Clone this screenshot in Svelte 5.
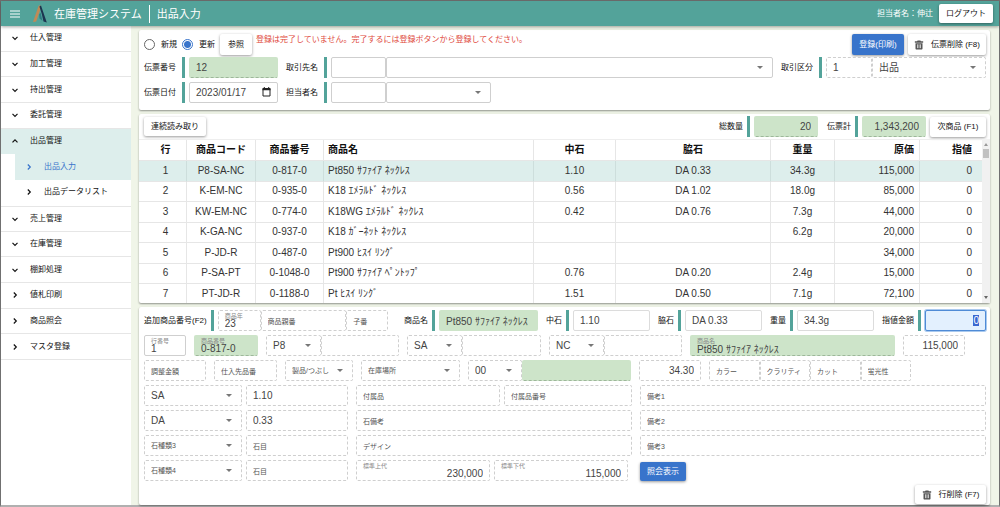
<script>
  import { onMount } from 'svelte';

  const menu = [
    { name: '仕入管理' },
    { name: '加工管理' },
    { name: '持出管理' },
    { name: '委託管理' },
    { name: '出品管理', open: true },
    { name: '出品入力', sub: true, current: true },
    { name: '出品データリスト', sub: true },
    { name: '売上管理' },
    { name: '在庫管理' },
    { name: '棚卸処理' },
    { name: '値札印刷', leaf: true },
    { name: '商品照会', leaf: true },
    { name: 'マスタ登録', leaf: true }
  ];

  const heads = ['行', '商品コード', '商品番号', '商品名', '中石', '脇石', '重量', '原価', '指値'];
  const rows = [
    ['1', 'P8-SA-NC', '0-817-0', 'Pt850 ｻﾌｧｲｱ ﾈｯｸﾚｽ', '1.10', 'DA 0.33', '34.3g', '115,000', '0'],
    ['2', 'K-EM-NC', '0-935-0', 'K18 ｴﾒﾗﾙﾄﾞ ﾈｯｸﾚｽ', '0.56', 'DA 1.02', '18.0g', '85,000', '0'],
    ['3', 'KW-EM-NC', '0-774-0', 'K18WG ｴﾒﾗﾙﾄﾞ ﾈｯｸﾚｽ', '0.42', 'DA 0.76', '7.3g', '44,000', '0'],
    ['4', 'K-GA-NC', '0-937-0', 'K18 ｶﾞｰﾈｯﾄ ﾈｯｸﾚｽ', '', '', '6.2g', '20,000', '0'],
    ['5', 'P-JD-R', '0-487-0', 'Pt900 ﾋｽｲ ﾘﾝｸﾞ', '', '', '', '34,000', '0'],
    ['6', 'P-SA-PT', '0-1048-0', 'Pt900 ｻﾌｧｲｱ ﾍﾟﾝﾄｯﾌﾟ', '0.76', 'DA 0.20', '2.4g', '15,000', '0'],
    ['7', 'PT-JD-R', '0-1188-0', 'Pt ﾋｽｲ ﾘﾝｸﾞ', '1.51', 'DA 0.50', '7.1g', '72,100', '0']
  ];

  let mode = $state('update');
  let limitPrice;

  onMount(() => {
    limitPrice.focus();
    limitPrice.select();
  });
</script>

{#snippet chevron(dir)}
  <svg class="chev" viewBox="0 0 8 8" aria-hidden="true">
    <path d={dir === 'down' ? 'M1.5 2.8 4 5.3 6.5 2.8' : dir === 'up' ? 'M1.5 5.3 4 2.8 6.5 5.3' : 'M2.8 1.5 5.3 4 2.8 6.5'} />
  </svg>
{/snippet}

{#snippet trash()}
  <svg class="trash" viewBox="0 0 12 12" aria-hidden="true">
    <path d="M4.3 0.6h3.4l.6 1H11v1.6H1V1.6h2.7z" />
    <path d="M1.8 3.8h8.4v6.4c0 .7-.5 1.2-1.2 1.2H3c-.7 0-1.200-.5-1.200-1.200z" />
    <path class="slot" d="M4.200 5.200v4.600M6 5.200v4.600M7.800 5.200v4.600" />
  </svg>
{/snippet}

{#snippet field(name, value = '', kind = 'dash')}
  <input class="box {kind}" aria-label={name} {value} readonly={kind.includes('green')} />
{/snippet}

{#snippet hint(name)}
  <input class="box dash" aria-label={name} placeholder={name} />
{/snippet}

{#snippet floating(name, value, kind = 'dash')}
  <label class="float">
    <span>{name}</span>
    <input class="box {kind}" {value} />
  </label>
{/snippet}

{#snippet drop(name, value = '', kind = 'dash')}
  <span class="drop">
    <select class="box {kind}" aria-label={name}><option>{value}</option></select>
  </span>
{/snippet}

<div class="page">
  <header>
    <button class="burger" aria-label="メニュー">
      <svg viewBox="0 0 10 8"><path d="M0 1h10M0 4h10M0 7h10" /></svg>
    </button>
    <svg class="logo" viewBox="0 0 14 18" aria-hidden="true">
      <path d="M5.500 1 7.200 0 8 2.500 3.200 16.500 0 17z" fill="#c08a56" />
      <path d="M6.400 1.500 8 0.500 13.800 17.500 10.500 16.500 8.800 9z" fill="#1c3550" />
      <path d="M6.200 9.500 7.500 7.500 9.500 16 6.500 13.500z" fill="#2d7d83" />
    </svg>
    <h1>在庫管理システム</h1>
    <h2>出品入力</h2>
    <span class="user">担当者名：伸辻</span>
    <button class="btn logout">ログアウト</button>
  </header>

  <div class="body">
    <nav>
      {#each menu as item}
        <a
          href="#menu"
          class:open={item.open}
          class:sub={item.sub}
          class:current={item.current}
        >
          {@render chevron(item.open ? 'up' : item.sub || item.leaf ? 'right' : 'down')}
          {item.name}
        </a>
      {/each}
    </nav>

    <main>
      <section class="panel slip">
        <div class="row first">
          <label class="radio"><input type="radio" value="new" bind:group={mode} />新規</label>
          <label class="radio"><input type="radio" value="update" bind:group={mode} />更新</label>
          <button class="btn refer">参照</button>
          <p class="error">登録は完了していません。完了するには登録ボタンから登録してください。</p>
          <button class="btn primary register">登録(印刷)</button>
          <button class="btn remove">{@render trash()}伝票削除 (F8)</button>
        </div>
        <div class="row">
          <div class="item short">
            <label for="slip-no">伝票番号</label>
            <input id="slip-no" class="box green" value="12" readonly />
          </div>
          <div class="item grow">
            <label for="client">取引先名</label>
            <div class="client">
              <input id="client" class="box" />
              {@render drop('取引先名選択', '', '')}
            </div>
          </div>
          <div class="item kubun">
            <label for="kubun">取引区分</label>
            <div class="kinds">
              <input id="kubun" class="box dash" value="1" />
              {@render drop('取引区分選択', '出品')}
            </div>
          </div>
        </div>
        <div class="row">
          <div class="item short">
            <label for="slip-date">伝票日付</label>
            <span class="date">
              <input id="slip-date" class="box" value="2023/01/17" />
              <svg viewBox="0 0 9 10" aria-hidden="true">
                <path d="M1 2h7v7H1z" /><path class="bar" d="M.5 1h8v2.200h-8zM1.800 0h1v1.500h-1zM6.200 0h1v1.500h-1z" />
              </svg>
            </span>
          </div>
          <div class="item staff">
            <label for="staff">担当者名</label>
            <div class="staffs">
              <input id="staff" class="box" />
              {@render drop('担当者名選択', '', '')}
            </div>
          </div>
        </div>
      </section>

      <section class="panel list">
        <div class="bar-row">
          <button class="btn scan">連続読み取り</button>
          <div class="item total">
            <label for="count">総数量</label>
            <input id="count" class="box green right" value="20" readonly />
          </div>
          <div class="item total">
            <label for="sum">伝票計</label>
            <input id="sum" class="box green right" value="1,343,200" readonly />
          </div>
          <button class="btn next">次商品 (F1)</button>
        </div>
        <div class="scroller">
          <table>
            <thead>
              <tr>{#each heads as head}<th scope="col">{head}</th>{/each}</tr>
            </thead>
            <tbody>
              {#each rows as row, i}
                <tr class:picked={i === 0}>{#each row as cell}<td>{cell}</td>{/each}</tr>
              {/each}
            </tbody>
          </table>
          <div class="track" aria-hidden="true"><i class="up"></i><i class="thumb"></i><i class="down"></i></div>
        </div>
      </section>

      <section class="panel detail">
        <div class="line a">
          <div class="item added">
            <label for="year">追加商品番号(F2)</label>
            <div class="triple">
              <div class="float">
                <span>商品年</span>
                <input id="year" class="box dash" value="23" />
              </div>
              {@render hint('商品親番')}
              {@render hint('子番')}
            </div>
          </div>
          <div class="item">
            <label for="pname">商品名</label>
            <input id="pname" class="box green plain" value="Pt850 ｻﾌｧｲｱ ﾈｯｸﾚｽ" readonly />
          </div>
          <div class="item">
            <label for="center">中石</label><input id="center" class="box soft" value="1.10" />
          </div>
          <div class="item">
            <label for="side">脇石</label><input id="side" class="box soft" value="DA 0.33" />
          </div>
          <div class="item">
            <label for="weight">重量</label><input id="weight" class="box soft" value="34.3g" />
          </div>
          <div class="item">
            <label for="limit">指値金額</label>
            <input id="limit" class="box active right" value="0" bind:this={limitPrice} />
          </div>
        </div>

        <div class="line b">
          {@render floating('行番号', '1', '')}
          {@render floating('商品番号', '0-817-0', 'green')}
          <div class="pair">{@render drop('地金', 'P8')}{@render field('地金名')}</div>
          <div class="pair">{@render drop('石種', 'SA')}{@render field('石種名')}</div>
          <div class="pair">{@render drop('品種', 'NC')}{@render field('品種名')}</div>
          {@render floating('商品名', 'Pt850 ｻﾌｧｲｱ ﾈｯｸﾚｽ', 'green')}
          {@render field('原価', '115,000', 'dash right')}
        </div>

        <div class="line c">
          {@render hint('調整金額')}
          {@render hint('仕入先品番')}
          <span class="muted">{@render drop('製品区分', '製品/つぶし')}</span>
          <span class="muted">{@render drop('在庫場所', '在庫場所')}</span>
          <div class="place">{@render drop('場所コード', '00')}{@render field('場所名', '', 'green')}</div>
          {@render field('重量', '34.30', 'dash right')}
          <div class="quad">
            {@render hint('カラー')}
            {@render hint('クラリティ')}
            {@render hint('カット')}
            {@render hint('蛍光性')}
          </div>
        </div>

        <div class="line d">
          <div class="stone">{@render drop('石種類1', 'SA')}{@render field('石目1', '1.10')}</div>
          <div class="extra">{@render hint('付属品')}{@render hint('付属品番号')}</div>
          {@render hint('備考1')}
        </div>
        <div class="line d">
          <div class="stone">{@render drop('石種類2', 'DA')}{@render field('石目2', '0.33')}</div>
          {@render hint('石備考')}
          {@render hint('備考2')}
        </div>
        <div class="line d">
          <div class="stone"><span class="muted">{@render drop('石種類3', '石種類3')}</span>{@render hint('石目')}</div>
          {@render hint('デザイン')}
          {@render hint('備考3')}
        </div>
        <div class="line d">
          <div class="stone"><span class="muted">{@render drop('石種類4', '石種類4')}</span>{@render hint('石目')}</div>
          <div class="price">
            {@render floating('標準上代', '230,000', 'dash right')}
            {@render floating('標準下代', '115,000', 'dash right')}
          </div>
          <div><button class="btn primary inquiry">照会表示</button></div>
        </div>
        <div class="foot"><button class="btn remove-row">{@render trash()}行削除 (F7)</button></div>
      </section>
    </main>
  </div>
</div>

<style>
  :global(body) {
    margin: 0;
  }
  .page,
  .page * {
    box-sizing: border-box;
  }
  .page {
    display: flex;
    flex-direction: column;
    min-height: 100vh;
    border: 1px solid #707070;
    border-bottom: 2px solid #b0b0b0;
    font: 8px/12px 'Liberation Sans', 'Noto Sans CJK JP', sans-serif;
    color: #111;
    background: #f0f5e8;
  }
  button,
  input,
  select {
    font: inherit;
    color: inherit;
    margin: 0;
    min-width: 0;
  }
  header {
    position: relative;
    z-index: 1;
    display: flex;
    align-items: center;
    height: 25px;
    padding: 0 6px 0 9px;
    color: #fff;
    background: #53a39a;
    box-shadow: 0 1px 3px rgba(0, 0, 0, 0.35);
  }
  .burger {
    width: 10px;
    height: 8px;
    padding: 0;
    border: 0;
    background: none;
  }
  .burger svg {
    display: block;
    stroke: #fff;
    stroke-width: 1;
  }
  .logo {
    width: 14px;
    height: 18px;
    margin: 0 7px 0 13px;
  }
  h1,
  h2 {
    margin: 0;
    font-size: 11px;
    line-height: 18px;
    font-weight: 400;
    white-space: nowrap;
  }
  h2 {
    margin-left: 7px;
    padding-left: 7px;
    border-left: 1px solid #fff;
  }
  .user {
    margin-left: auto;
    padding-right: 6px;
  }
  .btn {
    display: flex;
    align-items: center;
    justify-content: center;
    height: 21px;
    padding: 0;
    border: 0;
    border-radius: 2px;
    background: #fff;
    color: #111;
    white-space: nowrap;
    box-shadow: 0 1px 3px rgba(0, 0, 0, 0.4);
  }
  .btn.primary {
    color: #fff;
    background: #3874cb;
  }
  .logout {
    width: 54px;
    height: 19px;
  }
  .body {
    display: flex;
    flex: 1;
  }
  nav {
    flex: none;
    width: 130px;
    display: grid;
    grid-template-rows: repeat(13, minmax(0, 1fr)) 145px;
    background: #fff;
  }
  nav a {
    display: flex;
    align-items: center;
    gap: 11px;
    padding-left: 10px;
    border-bottom: 1px solid #e6e6e6;
    color: #111;
    text-decoration: none;
  }
  nav a.open {
    background: #ddeeec;
    border-color: #ddeeec;
  }
  nav a.sub {
    margin-left: 14px;
    border-color: transparent;
  }
  nav a.sub + a:not(.sub) {
    border-top: 1px solid #e6e6e6;
  }
  nav a.current {
    color: #3874cb;
    background: #ddeeec;
  }
  .chev {
    width: 8px;
    height: 8px;
    fill: none;
    stroke: currentColor;
    stroke-width: 1.2;
  }
  main {
    flex: 1;
    min-width: 0;
    display: flex;
    flex-direction: column;
    gap: 4px;
    padding: 4px 9px 0 8px;
  }
  .panel {
    background: #fff;
    border-radius: 2px;
    box-shadow: 0 1px 2px rgba(0, 0, 0, 0.4);
  }
  .slip {
    padding: 4px 4px 7px 5px;
  }
  .row {
    display: flex;
    gap: 8px;
  }
  .row + .row {
    margin-top: 4px;
  }
  .first {
    gap: 4px;
  }
  .first + .row {
    margin-top: 2px;
  }
  .radio {
    display: flex;
    align-items: center;
    gap: 6px;
    margin-right: 1px;
  }
  .radio input {
    appearance: none;
    width: 11px;
    height: 11px;
    border: 1px solid #666;
    border-radius: 50%;
  }
  .radio input:checked {
    border-color: #3874cb;
    background: radial-gradient(#3874cb 0 3px, #fff 4px);
  }
  .refer {
    width: 32px;
  }
  .error {
    flex: 1;
    margin: 0;
    color: #e0493c;
  }
  .register {
    width: 52px;
  }
  .remove {
    width: 78px;
    gap: 7px;
  }
  .trash {
    width: 10px;
    height: 10px;
    fill: #555;
  }
  .slot {
    stroke: #ddd;
    stroke-width: 1;
  }
  .item {
    display: flex;
    align-items: stretch;
    min-width: 0;
  }
  .item > label {
    flex: none;
    display: flex;
    align-items: center;
    padding-right: 4px;
    margin-right: 4px;
    border-right: 3px solid #53a39a;
    white-space: nowrap;
  }
  .item > :last-child {
    flex: 1;
    min-width: 0;
  }
  .row .item > label {
    width: 41px;
    padding-right: 0;
  }
  .short {
    flex: none;
    width: 134px;
  }
  .grow {
    flex: 1;
  }
  .kubun,
  .staff {
    width: 205px;
  }
  .client,
  .kinds,
  .staffs,
  .pair,
  .place,
  .triple,
  .quad {
    display: grid;
  }
  .client,
  .staffs {
    grid-template-columns: 55px 1fr;
  }
  .kinds {
    grid-template-columns: 46px 1fr;
  }
  .box {
    display: block;
    width: 100%;
    height: 21px;
    padding: 0 6px;
    border: 1px solid #cfcfcf;
    border-radius: 2px;
    outline: 0;
    background: #fff;
    color: #444;
    font-size: 10px;
  }
  .dash {
    border: 1px dashed #cfcfcf;
  }
  .soft {
    border-color: #dcdcdc;
  }
  .green {
    border-color: #cde4c9;
    border-bottom: 1px dashed #9db79a;
    background: #cde4c9;
  }
  .plain {
    border-bottom-color: #cde4c9;
  }
  .right {
    text-align: right;
  }
  .box::placeholder {
    font-size: 7px;
    color: #555;
    opacity: 1;
  }
  .active {
    border: 1px solid #4f8bd6;
    background: #e3f0fe;
    box-shadow: 0 0 0 1px #a9c9ee;
  }
  .active::selection {
    color: #fff;
    background: #3a66d0;
  }
  .drop {
    position: relative;
    display: block;
    min-width: 0;
  }
  .drop::after {
    content: '';
    position: absolute;
    right: 10px;
    top: 9px;
    border: 3px solid transparent;
    border-top-color: #777;
    border-bottom: 0;
    pointer-events: none;
  }
  select.box {
    appearance: none;
    padding-right: 16px;
  }
  .muted {
    display: block;
    min-width: 0;
  }
  .muted .box {
    font-size: 7px;
    color: #555;
  }
  .date {
    position: relative;
  }
  .date svg {
    position: absolute;
    right: 7px;
    top: 5px;
    width: 9px;
    height: 10px;
    fill: none;
    stroke: #222;
  }
  .date .bar {
    fill: #222;
    stroke: none;
  }
  .float {
    position: relative;
    display: block;
    min-width: 0;
  }
  .float span {
    position: absolute;
    left: 7px;
    top: 2px;
    font-size: 6px;
    line-height: 8px;
    color: #888;
    white-space: nowrap;
  }
  .float .box {
    padding-top: 6px;
  }
  .bar-row {
    display: flex;
    align-items: center;
    gap: 9px;
    height: 25px;
    padding: 0 4px 0 5px;
  }
  .scan {
    width: 62px;
    height: 19px;
    margin-right: auto;
  }
  .total {
    width: 99px;
  }
  .next {
    width: 56px;
    height: 20px;
    margin-left: -5px;
  }
  .scroller {
    display: flex;
  }
  table {
    flex: 1;
    height: 164px;
    table-layout: fixed;
    border-collapse: separate;
    border-spacing: 0;
    border-top: 1px solid #eee;
    font-size: 10px;
    color: #333;
  }
  th,
  td {
    padding: 0 4px;
    border-bottom: 1px solid #e6e6e6;
    border-right: 1px solid #e6e6e6;
    text-align: center;
    white-space: nowrap;
    line-height: 12px;
  }
  th {
    height: 21px;
    color: #111;
  }
  th:first-child,
  td:first-child {
    padding-left: 10px;
  }
  tbody tr:last-child td {
    border-bottom: 0;
  }
  .picked td {
    background: #ddeeec;
    border-right-color: #cddedc;
  }
  th:nth-child(1) {
    width: 48px;
  }
  th:nth-child(2) {
    width: 69px;
  }
  th:nth-child(3) {
    width: 68px;
  }
  th:nth-child(5) {
    width: 82px;
  }
  th:nth-child(6) {
    width: 155px;
  }
  th:nth-child(7) {
    width: 64px;
  }
  th:nth-child(8) {
    width: 85px;
  }
  th:nth-child(9) {
    width: 62px;
  }
  th:nth-child(4),
  td:nth-child(4) {
    text-align: left;
  }
  th:nth-child(n + 8),
  td:nth-child(n + 8) {
    padding-right: 5px;
    text-align: right;
  }
  th:last-child,
  td:last-child {
    padding-right: 10px;
    border-right: 0;
  }
  .track {
    display: flex;
    flex-direction: column;
    align-items: center;
    width: 8px;
    padding: 4px 0;
    background: #f1f1f1;
  }
  .up,
  .down {
    border: 2px solid transparent;
  }
  .up {
    border-top: 0;
    border-bottom: 3px solid #999;
  }
  .down {
    margin-top: auto;
    border-bottom: 0;
    border-top: 3px solid #666;
  }
  .thumb {
    width: 6px;
    height: 9px;
    margin-top: 3px;
    background: #c1c1c1;
  }
  .detail {
    flex: 1;
    display: flex;
    flex-direction: column;
    gap: 4px;
    padding: 3px 4px 0 5px;
  }
  .line {
    display: grid;
    column-gap: 8px;
  }
  .a {
    grid-template-columns: 252fr 134fr 104fr 104fr 104fr 104fr;
  }
  .added {
    padding-right: 8px;
  }
  .triple {
    grid-template-columns: 42fr 84fr 41fr;
  }
  .b {
    grid-template-columns: 42fr 64fr 133fr 134fr 133fr 205fr 62fr 13fr;
  }
  .pair {
    grid-template-columns: 55fr 78fr;
  }
  .c {
    grid-template-columns: 62fr 63fr 68fr 99fr 163fr 62fr 202fr 67fr;
  }
  .place {
    grid-template-columns: 54fr 109fr;
  }
  .quad {
    grid-template-columns: repeat(4, 1fr);
  }
  .d {
    grid-template-columns: 204fr 276fr 346fr;
  }
  .stone,
  .extra,
  .price {
    display: grid;
    column-gap: 4px;
  }
  .stone {
    grid-template-columns: 98fr 102fr;
  }
  .extra {
    grid-template-columns: 144fr 128fr;
  }
  .price {
    grid-template-columns: 1fr 1fr;
    padding-right: 4px;
  }
  .inquiry {
    width: 46px;
    height: 19px;
    margin-top: 2px;
  }
  .foot {
    display: flex;
    justify-content: flex-end;
  }
  .remove-row {
    width: 71px;
    height: 19px;
    gap: 7px;
  }
</style>
